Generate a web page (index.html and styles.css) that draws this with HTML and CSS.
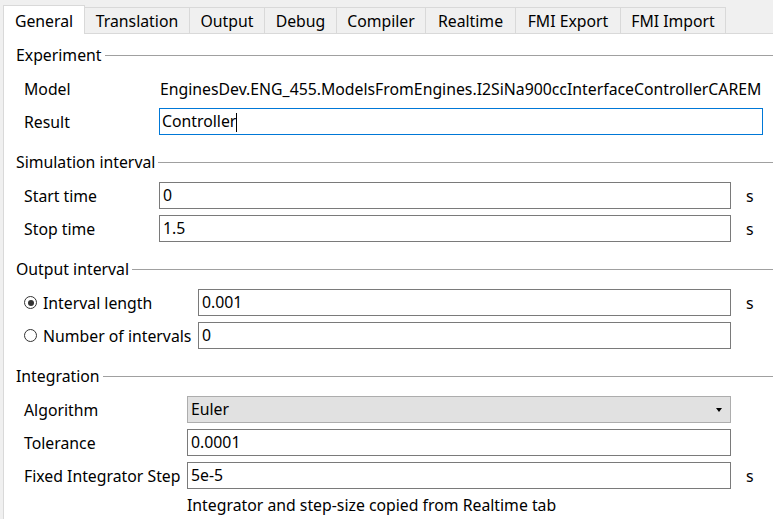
FILE: index.html
```html
<!DOCTYPE html>
<html>
<head>
<meta charset="utf-8">
<title>Simulation Setup</title>
<link rel="stylesheet" href="styles.css">
</head>
<body>
<div class="dialog">
  <div class="tabbar">
    <div class="tab active">General</div>
    <div class="tab w-translation">Translation</div>
    <div class="tab w-output">Output</div>
    <div class="tab w-debug">Debug</div>
    <div class="tab w-compiler">Compiler</div>
    <div class="tab w-realtime">Realtime</div>
    <div class="tab w-fmiexp">FMI Export</div>
    <div class="tab w-fmiimp">FMI Import</div>
    <div class="tab-rest"></div>
  </div>

  <div class="panel">
    <section class="group">
      <div class="group-title"><span>Experiment</span></div>
      <div class="rows cols-a">
        <div class="label">Model</div>
        <div class="value span2">EnginesDev.ENG_455.ModelsFromEngines.I2SiNa900ccInterfaceControllerCAREM</div>
        <div class="label">Result</div>
        <div class="field focus span2">Controller<span class="caret"></span></div>
      </div>
    </section>

    <section class="group">
      <div class="group-title"><span>Simulation interval</span></div>
      <div class="rows cols-a">
        <div class="label">Start time</div>
        <div class="field">0</div>
        <div class="unit">s</div>
        <div class="label">Stop time</div>
        <div class="field">1.5</div>
        <div class="unit">s</div>
      </div>
    </section>

    <section class="group">
      <div class="group-title"><span>Output interval</span></div>
      <div class="rows cols-b">
        <label class="label radio"><span class="dot checked"></span>Interval length</label>
        <div class="field">0.001</div>
        <div class="unit">s</div>
        <label class="label radio"><span class="dot"></span>Number of intervals</label>
        <div class="field">0</div>
        <div class="unit"></div>
      </div>
    </section>

    <section class="group">
      <div class="group-title"><span>Integration</span></div>
      <div class="rows cols-c">
        <div class="label">Algorithm</div>
        <div class="field combo">Euler<span class="arrow"></span></div>
        <div class="unit"></div>
        <div class="label">Tolerance</div>
        <div class="field">0.0001</div>
        <div class="unit"></div>
        <div class="label">Fixed Integrator Step</div>
        <div class="field">5e-5</div>
        <div class="unit">s</div>
        <div class="label"></div>
        <div class="note span2">Integrator and step-size copied from Realtime tab</div>
      </div>
    </section>
  </div>
</div>
</body>
</html>
```

FILE: styles.css
```css
html, body {
  margin: 0;
  padding: 0;
  background: #f0f0f0;
}

body {
  font-family: "Noto Sans", "Open Sans", sans-serif;
  font-size: 15.8px;
  color: #000;
  width: 773px;
  height: 519px;
  overflow: hidden;
}

.dialog {
  padding-left: 3px;
}

/* tab strip */
.tabbar {
  display: flex;
  align-items: flex-end;
  height: 34px;
}

.tab {
  box-sizing: border-box;
  height: 27px;
  line-height: 26px;
  text-align: center;
  background: #f0f0f0;
  border: 1px solid #d9d9d9;
  border-left: none;
  white-space: nowrap;
}

.tab.active {
  width: 82px;
  height: 29px;
  background: #fff;
  border-left: 1px solid #d9d9d9;
  border-bottom: none;
  line-height: 30px;
  padding-bottom: 3px;
}

.w-translation { width: 105px; }
.w-output { width: 75px; }
.w-debug { width: 72px; }
.w-compiler { width: 89px; }
.w-realtime { width: 90px; }
.w-fmiexp { width: 105px; }
.w-fmiimp { width: 105px; }

.tab-rest {
  flex: 1;
  height: 1px;
  background: #d9d9d9;
  align-self: flex-end;
}

/* page body */
.panel {
  background: #fff;
  border-left: 1px solid #d9d9d9;
  height: 485px;
  padding: 12px 10px 0 12px;
  box-sizing: border-box;
}

.group + .group {
  margin-top: 18px;
}

.group-title {
  display: flex;
  align-items: center;
  gap: 3px;
  height: 18px;
  margin-bottom: 11px;
  margin-right: -10px;
}

.group-title::after {
  content: "";
  flex: 1;
  height: 1px;
  background: #a0a0a0;
}

.rows {
  display: grid;
  grid-auto-rows: 27px;
  row-gap: 6px;
  padding-left: 8px;
  align-items: center;
}

.cols-a { grid-template-columns: 135px 1fr 32px; }
.cols-b { grid-template-columns: 174px 1fr 32px; }
.cols-c { grid-template-columns: 163px 1fr 32px; }

.span2 { grid-column: span 2; }

.label {
  white-space: nowrap;
}

.value {
  padding-left: 1px;
  white-space: nowrap;
}

.field {
  box-sizing: border-box;
  height: 27px;
  border: 1px solid #7a7a7a;
  padding: 0 3px;
  line-height: 25px;
  background: #fff;
  position: relative;
}

.field.focus {
  border-color: #0078d7;
  padding-left: 2px;
}

.caret {
  display: inline-block;
  width: 1px;
  height: 19px;
  background: #000;
  vertical-align: -5px;
}

.combo {
  background: #e1e1e1;
  border-color: #adadad;
}

.arrow {
  position: absolute;
  right: 8px;
  top: 11px;
  width: 0;
  height: 0;
  border-left: 3.5px solid transparent;
  border-right: 3.5px solid transparent;
  border-top: 4px solid #000;
}

.unit {
  padding-left: 15px;
}

.radio {
  display: flex;
  align-items: center;
  gap: 6px;
}

.dot {
  box-sizing: border-box;
  width: 13px;
  height: 13px;
  border: 1px solid #333;
  border-radius: 50%;
  background: #fff;
  position: relative;
}

.dot.checked::after {
  content: "";
  position: absolute;
  left: 2.5px;
  top: 2.5px;
  width: 6px;
  height: 6px;
  border-radius: 50%;
  background: #333;
}

.note {
  padding-left: 0;
  line-height: 20px;
  align-self: start;
}
```
